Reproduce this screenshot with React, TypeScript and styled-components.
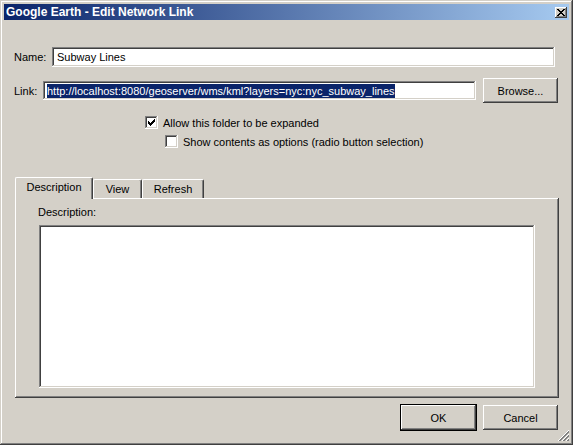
import React from "react";
import styled, { createGlobalStyle } from "styled-components";

const Global = createGlobalStyle`
  html, body { margin: 0; padding: 0; background: #d4d0c8; }
  body { font-family: "Liberation Sans", Arial, sans-serif; font-size: 11px; color: #000; }
  * { box-sizing: border-box; }
`;

const raised = `box-shadow: inset -1px -1px #404040, inset 1px 1px #ffffff, inset -2px -2px #808080, inset 2px 2px #d4d0c8;`;
const sunken = `box-shadow: inset -1px -1px #ffffff, inset 1px 1px #808080, inset -2px -2px #d4d0c8, inset 2px 2px #404040;`;

const Window = styled.div`
  position: relative;
  width: 573px;
  height: 445px;
  padding: 4px;
  background: #d4d0c8;
  box-shadow: inset -1px -1px #404040, inset 1px 1px #d4d0c8, inset -2px -2px #808080, inset 2px 2px #ffffff;
  display: flex;
  flex-direction: column;
`;

const TitleBar = styled.div`
  height: 16px;
  display: flex;
  align-items: center;
  justify-content: space-between;
  padding: 0 2px 0 2px;
  background: linear-gradient(to right, #0a246a, #a6caf0);
`;

const TitleText = styled.span`
  color: #fff;
  font-weight: bold;
  font-size: 12px;
  font-family: "Liberation Sans", Arial, sans-serif;
`;

const CloseButton = styled.div`
  width: 12px;
  height: 11px;
  background: #d4d0c8;
  ${raised}
  display: flex;
  align-items: center;
  justify-content: center;
`;

const Body = styled.div`
  flex: 1;
  display: flex;
  flex-direction: column;
  padding: 27px 11px 0 10px;
`;

const Row = styled.div<{ $h: number; $mt?: number }>`
  display: flex;
  align-items: center;
  height: ${(p) => p.$h}px;
  margin-top: ${(p) => p.$mt ?? 0}px;
`;

const Label = styled.span<{ $w: number }>`
  width: ${(p) => p.$w}px;
  flex: none;
`;

const Field = styled.div<{ $w: number; $h: number; $pl: number }>`
  width: ${(p) => p.$w}px;
  height: ${(p) => p.$h}px;
  background: #fff;
  ${sunken}
  display: flex;
  align-items: center;
  padding-left: ${(p) => p.$pl}px;
  white-space: nowrap;
  overflow: hidden;
`;

const Selected = styled.span`
  background: #0a246a;
  color: #fff;
  line-height: 14px;
`;

const Button = styled.div<{ $w: number; $ml?: number }>`
  width: ${(p) => p.$w}px;
  height: 25px;
  margin-left: ${(p) => p.$ml ?? 0}px;
  background: #d4d0c8;
  ${raised}
  display: flex;
  align-items: center;
  justify-content: center;
  flex: none;
`;

const DefaultFrame = styled.div`
  border: 1px solid #000;
  flex: none;
  display: flex;
`;

const Checks = styled.div`
  display: flex;
  flex-direction: column;
  gap: 6px;
  margin-top: 13px;
  padding-left: 131px;
`;

const CheckRow = styled.div<{ $indent?: number }>`
  display: flex;
  align-items: center;
  height: 13px;
  gap: 5px;
  padding-left: ${(p) => p.$indent ?? 0}px;
`;

const Box = styled.div`
  width: 13px;
  height: 13px;
  background: #fff;
  ${sunken}
  display: flex;
  align-items: center;
  justify-content: center;
  flex: none;
`;

const TabArea = styled.div`
  margin-top: 29px;
  margin-left: 1px;
  width: 544px;
  display: flex;
  flex-direction: column;
`;

const TabStrip = styled.div`
  height: 21px;
  display: flex;
  align-items: flex-end;
`;

const Tab = styled.div<{ $w: number; $active?: boolean }>`
  position: relative;
  z-index: ${(p) => (p.$active ? 2 : 0)};
  width: ${(p) => p.$w}px;
  height: ${(p) => (p.$active ? 22 : 19)}px;
  margin-bottom: ${(p) => (p.$active ? -1 : 0)}px;
  padding-bottom: ${(p) => (p.$active ? 3 : 0)}px;
  background: #d4d0c8;
  border-top: 1px solid #fff;
  border-left: 1px solid #fff;
  border-right: 1px solid #404040;
  border-radius: 2px 2px 0 0;
  box-shadow: inset -1px 0 #808080;
  display: flex;
  align-items: center;
  justify-content: center;
`;

const Panel = styled.div`
  height: 200px;
  background: #d4d0c8;
  box-shadow: inset -1px -1px #404040, inset 1px 1px #ffffff, inset -2px -2px #808080;
  padding: 8px 0 0 23px;
  display: flex;
  flex-direction: column;
`;

const PanelLabel = styled.div`
  height: 13px;
  line-height: 13px;
`;

const TextArea = styled.div`
  margin-top: 6px;
  margin-left: 1px;
  width: 496px;
  height: 163px;
  background: #fff;
  ${sunken}
`;

const Footer = styled.div`
  display: flex;
  justify-content: flex-end;
  align-items: center;
  gap: 6px;
  margin-top: 6px;
`;

const Grip = styled.svg`
  position: absolute;
  right: 3px;
  bottom: 3px;
`;

export default function App() {
  return (
    <>
      <Global />
      <Window>
        <TitleBar>
          <TitleText>Google Earth - Edit Network Link</TitleText>
          <CloseButton>
            <svg width="8" height="7" viewBox="0 0 8 7" shapeRendering="crispEdges">
              <path d="M0 0h2v1h-2zM6 0h2v1h-2zM1 1h2v1h-2zM5 1h2v1h-2zM2 2h4v1h-4zM3 3h2v1h-2zM2 4h4v1h-4zM1 5h2v1h-2zM5 5h2v1h-2zM0 6h2v1h-2zM6 6h2v1h-2z" fill="#000" />
            </svg>
          </CloseButton>
        </TitleBar>
        <Body>
          <Row $h={20}>
            <Label $w={38}>Name:</Label>
            <Field $w={503} $h={20} $pl={5}>Subway Lines</Field>
          </Row>
          <Row $h={25} $mt={11}>
            <Label $w={29}>Link:</Label>
            <Field $w={433} $h={19} $pl={4}>
              <Selected>http://localhost:8080/geoserver/wms/kml?layers=nyc:nyc_subway_lines</Selected>
            </Field>
            <Button $w={75} $ml={7}>Browse...</Button>
          </Row>
          <Checks>
            <CheckRow>
              <Box>
                <svg width="7" height="7" viewBox="0 0 7 7" shapeRendering="crispEdges">
                  <path d="M6 0h1v1h-1zM5 1h2v1h-2zM0 2h1v1h-1zM4 2h3v1h-3zM0 3h2v1h-2zM3 3h3v1h-3zM0 4h5v1h-5zM1 5h3v1h-3zM2 6h1v1h-1z" fill="#000" />
                </svg>
              </Box>
              <span>Allow this folder to be expanded</span>
            </CheckRow>
            <CheckRow $indent={20}>
              <Box />
              <span>Show contents as options (radio button selection)</span>
            </CheckRow>
          </Checks>
          <TabArea>
            <TabStrip>
              <Tab $w={78} $active>Description</Tab>
              <Tab $w={49}>View</Tab>
              <Tab $w={62}>Refresh</Tab>
            </TabStrip>
            <Panel>
              <PanelLabel>Description:</PanelLabel>
              <TextArea />
            </Panel>
          </TabArea>
          <Footer>
            <DefaultFrame>
              <Button $w={75}>OK</Button>
            </DefaultFrame>
            <Button $w={75}>Cancel</Button>
          </Footer>
        </Body>
        <Grip width="12" height="12" viewBox="0 0 12 12" shapeRendering="crispEdges">
          <path d="M11 1L1 11M11 5L5 11M11 9L9 11" stroke="#808080" strokeWidth="1" />
          <path d="M11 2L2 11M11 6L6 11M11 10L10 11" stroke="#808080" strokeWidth="1" />
          <path d="M11 0L0 11M11 4L4 11M11 8L8 11" stroke="#ffffff" strokeWidth="1" />
        </Grip>
      </Window>
    </>
  );
}
